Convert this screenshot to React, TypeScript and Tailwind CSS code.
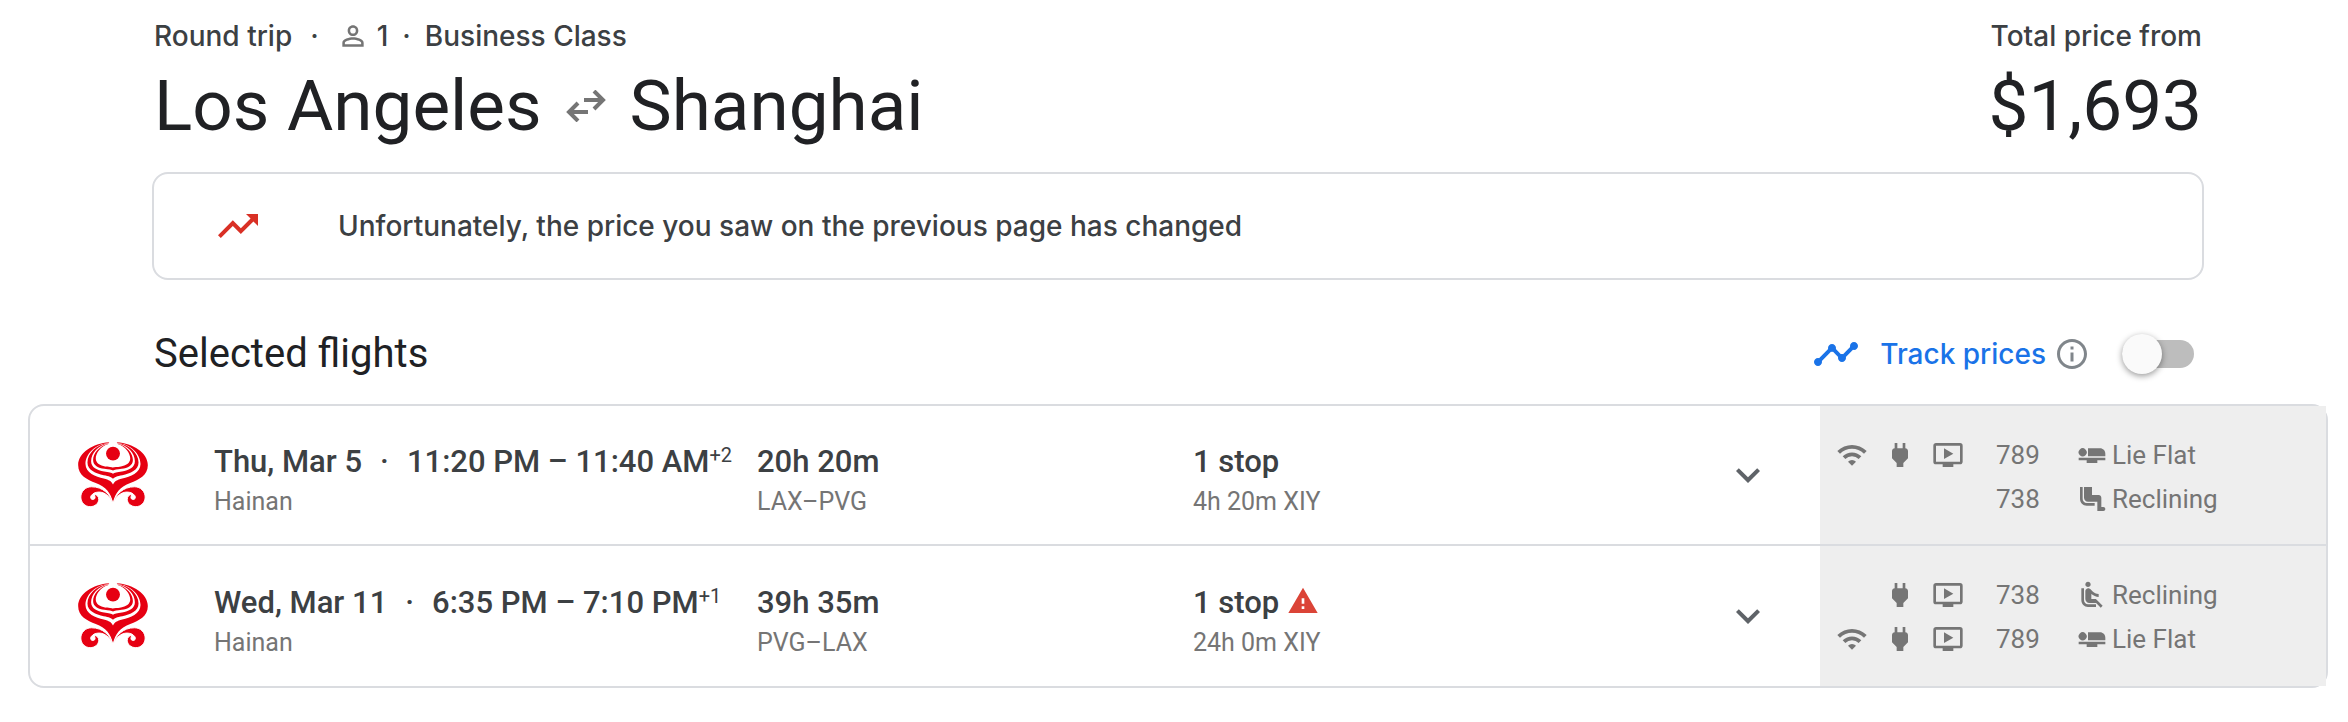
import { useState } from "react";
import type { IconType } from "react-icons";
import {
  MdAirlineSeatFlat,
  MdAirlineSeatLegroomNormal,
  MdAirlineSeatReclineNormal,
  MdInfoOutline,
  MdKeyboardArrowDown,
  MdOndemandVideo,
  MdPersonOutline,
  MdPower,
  MdTimeline,
  MdTrendingUp,
  MdWarning,
  MdWifi,
} from "react-icons/md";

type Segment = {
  wifi: boolean;
  power: boolean;
  video: boolean;
  aircraft: string;
  seat: string;
  SeatIcon: IconType;
};

type Flight = {
  id: number;
  date: string;
  time: string;
  dayOffset: string;
  airline: string;
  duration: string;
  route: string;
  stops: string;
  layover: string;
  warning: boolean;
  segments: Segment[];
};

const flights: Flight[] = [
  {
    id: 1,
    date: "Thu, Mar 5",
    time: "11:20 PM – 11:40 AM",
    dayOffset: "+2",
    airline: "Hainan",
    duration: "20h 20m",
    route: "LAX–PVG",
    stops: "1 stop",
    layover: "4h 20m XIY",
    warning: false,
    segments: [
      { wifi: true, power: true, video: true, aircraft: "789", seat: "Lie Flat", SeatIcon: MdAirlineSeatFlat },
      {
        wifi: false,
        power: false,
        video: false,
        aircraft: "738",
        seat: "Reclining",
        SeatIcon: MdAirlineSeatLegroomNormal,
      },
    ],
  },
  {
    id: 2,
    date: "Wed, Mar 11",
    time: "6:35 PM – 7:10 PM",
    dayOffset: "+1",
    airline: "Hainan",
    duration: "39h 35m",
    route: "PVG–LAX",
    stops: "1 stop",
    layover: "24h 0m XIY",
    warning: true,
    segments: [
      {
        wifi: false,
        power: true,
        video: true,
        aircraft: "738",
        seat: "Reclining",
        SeatIcon: MdAirlineSeatReclineNormal,
      },
      { wifi: true, power: true, video: true, aircraft: "789", seat: "Lie Flat", SeatIcon: MdAirlineSeatFlat },
    ],
  },
];

// One half of the Hainan emblem, mirrored for the other side
function LogoHalf() {
  return (
    <>
      <path
        fill="#e60012"
        d="M0 10L-12 3C-60 6-105 35-105 72C-105 103-78 115-52 126C-22 138-6 155 0 186Z"
      />
      <path fill="#fff" d="M0 10L-11 4C-55 8-83 38-83 68C-83 95-52 106-28 112C-12 116-4 121 0 130Z" />
      <path fill="#e60012" d="M0 12L-12 5C-50 9-77 36-77 64C-77 87-52 97-28 102C-12 105-4 107 0 113Z" />
      <path fill="#fff" d="M0 14L-13 6C-45 12-66 36-66 60C-66 79-48 87-27 91C-12 93-4 94 0 98Z" />
      <path fill="#e60012" d="M0 14L-14 7C-42 14-60 36-60 56C-60 73-44 80-26 83C-12 85-4 86 0 88Z" />
      <path fill="#fff" d="M1 0H-10L-14 8C-38 15-52 36-52 52C-52 66-38 74-24 76C-12 78-4 78 1 79Z" />
      <path
        fill="#e60012"
        stroke="#fff"
        strokeWidth="3"
        d="M0 188C-8 160-30 137-65 137C-84 137-97 152-97 168C-97 185-84 197-69 197C-54 197-43 187-43 175C-43 167-48 160-57 160C-53 168-53 173-58 175C-65 177-70 171-66 164C-60 156-52 153-42 153C-25 153-10 165 0 188Z"
      />
    </>
  );
}

function HainanLogo() {
  return (
    <svg viewBox="-105 2 210 196" className="w-[70px] h-[65px]" role="img" aria-label="Hainan">
      <LogoHalf />
      <g transform="scale(-1 1)">
        <LogoHalf />
      </g>
      <circle cx="0" cy="37" r="21" fill="#e60012" />
    </svg>
  );
}

function RoundTripArrows() {
  return (
    <svg viewBox="0 0 40 32" className="w-10 h-8" fill="none" stroke="#757575" strokeWidth="4" aria-hidden="true">
      <path d="M18 10H36M28 1L37 10L28 19" />
      <path d="M22 22H4M12 13L3 22L12 31" />
    </svg>
  );
}

function SegmentDetails({ segments }: { segments: Segment[] }) {
  return (
    <div className="w-[506px] shrink-0 flex bg-[#eeeeee] pl-4 pt-[27px] text-[#757575] text-[26px] leading-[44px]">
      <div className="w-36 mr-4">
        {segments.map((segment) => (
          <div key={segment.aircraft} className="grid grid-cols-3 h-11 items-center">
            <span>{segment.wifi && <MdWifi size={32} />}</span>
            <span>{segment.power && <MdPower size={32} />}</span>
            <span>{segment.video && <MdOndemandVideo size={32} />}</span>
          </div>
        ))}
      </div>
      <div className="w-20">
        {segments.map((segment) => (
          <div key={segment.aircraft}>{segment.aircraft}</div>
        ))}
      </div>
      <div>
        {segments.map(({ aircraft, seat, SeatIcon }) => (
          <div key={aircraft} className="flex items-center gap-1">
            <SeatIcon size={32} />
            {seat}
          </div>
        ))}
      </div>
    </div>
  );
}

function FlightRow({ flight }: { flight: Flight }) {
  return (
    <li className="flex h-[140px] border-[#dadce0] not-last:border-b-2">
      <div className="flex-1 grid grid-cols-[184px_543fr_436fr_531fr_96px] items-center whitespace-nowrap">
        <div className="pl-12 pb-0.5">
          <HainanLogo />
        </div>
        <div className="pt-2.5">
          <div className="text-[31px] leading-[44px] font-medium">
            {flight.date}
            <span className="mx-[18px]">·</span>
            {flight.time}
            <sup className="text-xl leading-none font-normal">{flight.dayOffset}</sup>
          </div>
          <div className="text-[25px] leading-9 text-[#757575]">{flight.airline}</div>
        </div>
        <div className="pt-2.5">
          <div className="text-[31px] leading-[44px] font-medium">{flight.duration}</div>
          <div className="text-[25px] leading-9 text-[#757575]">{flight.route}</div>
        </div>
        <div className="pt-2.5">
          <div className="flex items-center gap-2 text-[31px] leading-[44px] font-medium">
            {flight.stops}
            {flight.warning && <MdWarning size={32} color="#db4437" className="mb-1" />}
          </div>
          <div className="text-[25px] leading-9 text-[#757575]">{flight.layover}</div>
        </div>
        <button type="button" aria-label="Flight details" className="size-12 text-[#5f6368]">
          <MdKeyboardArrowDown size={48} />
        </button>
      </div>
      <SegmentDetails segments={flight.segments} />
    </li>
  );
}

function App() {
  const [tracking, setTracking] = useState(false);

  return (
    <main className="bg-white pt-4 pb-8 font-[Roboto,sans-serif] text-[#3c4043]">
      <div className="pl-[152px] pr-36">
        <header className="flex justify-between px-0.5">
          <div>
            <div className="flex items-center font-[Inter,sans-serif] text-[28px] leading-10 font-medium">
              Round trip
              <span className="mx-[18px]">·</span>
              <MdPersonOutline size={32} color="#757575" />
              <span className="ml-2">1</span>
              <span className="mx-3.5">·</span>
              Business Class
            </div>
            <h1 className="flex items-center gap-6 text-[71px] leading-[100px] text-[#202124]">
              Los Angeles
              <RoundTripArrows />
              Shanghai
            </h1>
          </div>
          <div className="text-right">
            <div className="font-[Inter,sans-serif] text-[28px] leading-10 font-medium">Total price from</div>
            <div className="text-[71px] leading-[100px] text-[#202124]">$1,693</div>
          </div>
        </header>

        <div className="mt-4 flex items-center gap-[76px] rounded-2xl border-2 border-[#dadce0] py-7 px-[60px]">
          <MdTrendingUp size={48} color="#d93025" />
          <p className="font-[Inter,sans-serif] text-[28px] leading-10 font-medium">
            Unfortunately, the price you saw on the previous page has changed
          </p>
        </div>

        <div className="mt-12 flex items-center justify-between pl-0.5 pr-2.5">
          <h2 className="text-[40px] leading-[52px] text-[#202124]">Selected flights</h2>
          <div className="flex items-center">
            <MdTimeline size={48} color="#1a73e8" />
            <label
              htmlFor="track-prices"
              className="ml-5 font-[Inter,sans-serif] text-[28px] leading-10 font-medium text-[#1a73e8]"
            >
              Track prices
            </label>
            <button type="button" aria-label="About price tracking" className="ml-2 text-[#80868b]">
              <MdInfoOutline size={36} />
            </button>
            <input
              id="track-prices"
              type="checkbox"
              role="switch"
              checked={tracking}
              onChange={(e) => setTracking(e.target.checked)}
              className="ml-8 flex h-7 w-[72px] appearance-none items-center rounded-full bg-[#bdbdbd] before:size-10 before:shrink-0 before:rounded-full before:bg-[#fafafa] before:shadow-[0_2px_6px_rgba(0,0,0,0.4)] checked:justify-end checked:bg-[#8ab4f8] checked:before:bg-[#1a73e8]"
            />
          </div>
        </div>
      </div>

      <ul className="mt-6 ml-7 mr-5 rounded-2xl border-2 border-[#dadce0]">
        {flights.map((flight) => (
          <FlightRow key={flight.id} flight={flight} />
        ))}
      </ul>
    </main>
  );
}

export default App;
